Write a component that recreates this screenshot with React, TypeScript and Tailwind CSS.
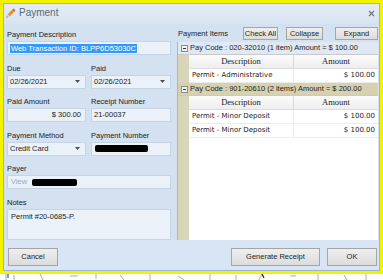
import React from "react";

const sans = "font-['Liberation_Sans',Arial,sans-serif]";

const Btn = ({ label, className }: { label: string; className: string }) => (
  <div
    className={`flex items-center justify-center border border-[#a5a5a5] bg-linear-to-b from-[#efefef] to-[#dcdcdc] text-[#1e1e1e] ${className}`}
  >
    {label}
  </div>
);

const Arrow = () => (
  <svg width="5" height="3" viewBox="0 0 5 3" className="ml-auto mr-[3px]">
    <path d="M0 0h5L2.5 3z" fill="#4d4d4d" />
  </svg>
);

const Field = ({
  label,
  children,
  className = "",
  box = "h-[14px]",
}: {
  label: string;
  children?: React.ReactNode;
  className?: string;
  box?: string;
}) => (
  <div className={`flex flex-col ${className}`}>
    <div className="h-[11px] leading-[11px]">{label}</div>
    <div
      className={`mt-[1px] flex items-center border border-[#c4d3e6] bg-[#ebf1f9] px-[2px] ${box}`}
    >
      {children}
    </div>
  </div>
);

const MinusBox = () => (
  <div className="flex h-[7px] w-[7px] items-center justify-center border border-[#8c8c8c] bg-[#f4f4f4]">
    <div className="h-[1px] w-[3px] bg-[#333]" />
  </div>
);

const Group = ({
  title,
  tone,
  rows,
  grow = false,
}: {
  title: string;
  tone: string;
  rows: string[][];
  grow?: boolean;
}) => (
  <div className={`flex flex-col ${grow ? "flex-1" : ""}`}>
    <div
      className={`flex h-[13px] items-center gap-[2px] border-b border-[#c9c9c9] pl-[3px] ${tone}`}
    >
      <MinusBox />
      <span className="text-[#1e1e1e]">{title}</span>
    </div>
    <div className="flex flex-1">
      <div className="w-[11px] bg-[#d9d6b7]" />
      <div className="flex flex-1 flex-col bg-white">
        <div className="flex h-[14px] border-b border-[#dcdcdc] bg-linear-to-b from-[#fbfbfb] to-[#eeeeee] font-['Liberation_Serif',serif] text-[8.5px] text-[#222]">
          <div className="flex w-[105px] items-center justify-center border-r border-[#d8d8d8]">
            Description
          </div>
          <div className="flex flex-1 items-center justify-center">Amount</div>
        </div>
        {rows.map((r, i) => (
          <div
            key={i}
            className="flex h-[14px] border-b border-[#ececec] font-['DejaVu_Sans',Verdana,sans-serif] text-[7px] text-[#222]"
          >
            <div className="flex w-[105px] items-center border-r border-[#ececec] pl-[3px]">
              {r[0]}
            </div>
            <div className="flex flex-1 items-center justify-end pr-[3px]">{r[1]}</div>
          </div>
        ))}
      </div>
    </div>
  </div>
);

export default function App() {
  return (
    <div className={`h-[280px] w-[383px] overflow-hidden bg-white text-[7.5px] text-[#1b1b1b] ${sans}`}>
      <div className="flex h-[274px] flex-col border-[3px] border-[#f3f300]">
        <div className="flex flex-1 flex-col border border-[#9fb2ca] bg-[#d3e1f1]">
          {/* title bar */}
          <div className="flex h-[20px] items-center bg-linear-to-b from-[#e4ecf6] to-[#d9e4f2] pb-[3px]">
            <svg width="10" height="10" viewBox="0 0 10 10" className="ml-[2px]">
              <path d="M7.4 0.6l2 2-5.6 5.6-2-2z" fill="#f08a1e" />
              <path d="M7.4 0.6l2 2-0.9 0.9-2-2z" fill="#d9661a" />
              <path d="M1.8 6.2l2 2-3 1z" fill="#e9c49a" />
              <path d="M0.8 8.2l1 1-1.3 0.4z" fill="#333" />
            </svg>
            <span className="ml-[3px] text-[10px] text-[#5b6878]">Payment</span>
            <svg width="7" height="7" viewBox="0 0 7 7" className="ml-auto mr-[4px] mt-[2px]">
              <path d="M1 1l5 5M6 1l-5 5" stroke="#6d7886" strokeWidth="1.2" />
            </svg>
          </div>

          {/* body */}
          <div className="flex h-[216px]">
            <div className="flex w-[173px] flex-col gap-[7.5px] pl-[3px] pr-[6px] pt-[5px]">
              <Field label="Payment Description">
                <span className="bg-[#3399ff] px-[1px] leading-[9px] text-white">
                  Web Transaction ID: BLPP6D53030C
                </span>
              </Field>
              <div className="flex gap-[5px]">
                <Field label="Due" className="w-[79px]">
                  <span>02/26/2021</span>
                  <Arrow />
                </Field>
                <Field label="Paid" className="flex-1">
                  <span>02/26/2021</span>
                  <Arrow />
                </Field>
              </div>
              <div className="flex gap-[5px]">
                <Field label="Paid Amount" className="w-[79px]">
                  <span className="ml-auto mr-[2px]">$ 300.00</span>
                </Field>
                <Field label="Receipt Number" className="flex-1">
                  <span>21-00037</span>
                </Field>
              </div>
              <div className="flex gap-[5px]">
                <Field label="Payment Method" className="w-[79px]">
                  <span>Credit Card</span>
                  <Arrow />
                </Field>
                <Field label="Payment Number" className="flex-1">
                  <div className="ml-[1px] h-[7px] w-[53px] rounded-[2px] bg-black" />
                </Field>
              </div>
              <Field label="Payer">
                <span className="ml-[1px] text-[#8ea9cb]">View</span>
                <div className="ml-[5px] h-[7px] w-[45px] rounded-[2px] bg-black" />
              </Field>
              <Field label="Notes" box="h-[31px] !items-start pt-[1px]">
                <span className="ml-[1px]">Permit #20-0685-P.</span>
              </Field>
            </div>

            <div className="flex flex-1 flex-col pr-[1px]">
              <div className="flex h-[13px] items-center mt-[3px]">
                <span className="ml-[1px]">Payment Items</span>
                <Btn label="Check All" className="ml-auto h-[13px] w-[35px]" />
                <Btn label="Collapse" className="ml-[8px] h-[13px] w-[37px]" />
                <Btn label="Expand" className="ml-[12px] h-[13px] w-[43px]" />
              </div>
              <div className="mt-[2px] flex flex-1 flex-col border-l border-[#a9b5c3]">
                <Group
                  title="Pay Code : 020-32010 (1 item) Amount = $ 100.00"
                  tone="bg-[#dfe8f3]"
                  rows={[["Permit - Administrative", "$ 100.00"]]}
                />
                <Group
                  title="Pay Code : 901-20610 (2 items) Amount = $ 200.00"
                  tone="bg-[#d5d1b1]"
                  rows={[
                    ["Permit - Minor Deposit", "$ 100.00"],
                    ["Permit - Minor Deposit", "$ 100.00"],
                  ]}
                  grow
                />
              </div>
            </div>
          </div>

          {/* footer */}
          <div className="flex flex-1 items-start bg-[#d8e5f4] pl-[4px] pr-[2px] pt-[8px]">
            <Btn label="Cancel" className="h-[18px] w-[50px]" />
            <Btn label="Generate Receipt" className="ml-auto h-[18px] w-[89px]" />
            <Btn label="OK" className="ml-[7px] h-[18px] w-[50px]" />
          </div>
        </div>
      </div>
      <svg width="383" height="6" viewBox="0 0 383 6" className="block">
        <path
          d="M6 0v6M14 1v5M40 0l3 6M70 2h8M96 0v5M120 1l4 5M150 0v6M178 2l6 4M210 0v6M236 1v5M262 0l-3 6M290 2h6M318 0v6M344 1l3 5M366 0v6"
          stroke="#a8adb5"
          strokeWidth="1"
        />
        <path d="M262 0l2 4" stroke="#222" strokeWidth="1.2" />
        <path d="M8 0v4" stroke="#5d7bb0" strokeWidth="1.5" />
      </svg>
    </div>
  );
}
